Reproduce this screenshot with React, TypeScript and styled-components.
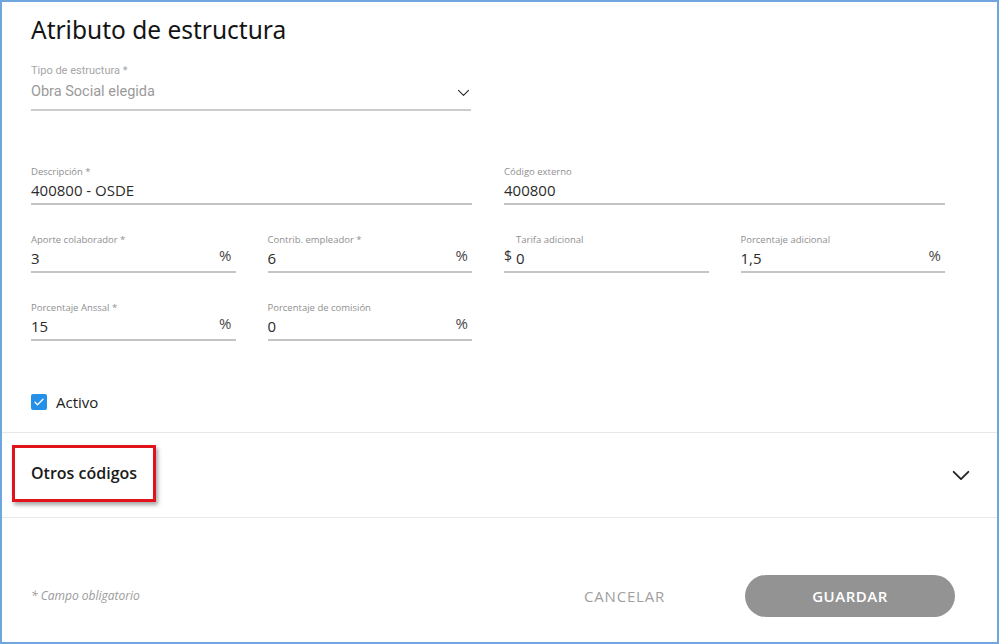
import React from "react";
import styled, { createGlobalStyle } from "styled-components";

const GlobalStyle = createGlobalStyle`
  html, body {
    margin: 0;
    padding: 0;
    background: #ffffff;
  }
  * {
    box-sizing: border-box;
  }
`;

const Frame = styled.div`
  width: 999px;
  height: 644px;
  border: 2px solid #6ea6dd;
  background: #ffffff;
  display: flex;
  flex-direction: column;
  font-family: "Open Sans", "Noto Sans", sans-serif;
  color: #333333;
  overflow: hidden;
`;

const Content = styled.div`
  padding: 12px 52px 0 29px;
`;

const Title = styled.h1`
  margin: 0;
  font-family: "Noto Sans", "Open Sans", sans-serif;
  font-size: 24.5px;
  font-weight: 400;
  line-height: 32px;
  color: #141414;
`;

const SelectField = styled.div`
  width: 440px;
  margin-top: 18px;
  border-bottom: 2px solid #cccccc;
  padding-bottom: 7px;
  font-family: Roboto, "Open Sans", sans-serif;
`;

const SelectLabel = styled.div`
  font-size: 11px;
  line-height: 14px;
  color: #a6a6a6;
`;

const SelectRow = styled.div`
  display: flex;
  align-items: center;
  justify-content: space-between;
  margin-top: 4px;
  font-size: 14.5px;
  line-height: 20px;
  color: #9a9a9a;
`;

const Grid = styled.div`
  display: grid;
  grid-template-columns: repeat(4, 1fr);
  column-gap: 32px;
  row-gap: 29px;
  margin-top: 55px;
  width: 914px;
`;

const Field = styled.div<{ $span?: number }>`
  grid-column: span ${(p) => p.$span ?? 1};
  border-bottom: 2px solid #c4c4c4;
  padding-bottom: 3px;
`;

const Label = styled.div<{ $indent?: boolean }>`
  font-size: 9.5px;
  line-height: 12px;
  color: #8f8f8f;
  padding-left: ${(p) => (p.$indent ? "12px" : "0")};
`;

const ValueRow = styled.div`
  display: flex;
  align-items: center;
  margin-top: 2px;
  height: 20px;
`;

const Prefix = styled.span`
  font-size: 14px;
  color: #333333;
  margin-right: 4px;
  margin-top: -6px;
`;

const Value = styled.span`
  flex: 1;
  font-size: 15px;
  line-height: 20px;
  color: #2b2b2b;
`;

const Suffix = styled.span`
  font-size: 15px;
  color: #4a4a4a;
  margin-right: 4px;
  margin-top: -6px;
`;

const CheckRow = styled.label`
  display: flex;
  align-items: center;
  gap: 9px;
  margin-top: 51px;
  margin-bottom: 20px;
  font-size: 15px;
  color: #1c1c1c;
`;

const CheckBox = styled.span`
  width: 16px;
  height: 16px;
  border-radius: 2px;
  background: #2490e8;
  display: flex;
  align-items: center;
  justify-content: center;
`;

const Accordion = styled.div`
  position: relative;
  border-top: 1px solid #e8e8e8;
  border-bottom: 1px solid #e8e8e8;
  height: 86px;
  display: flex;
  align-items: center;
  justify-content: space-between;
  padding: 0 25px 0 29px;
`;

const AccordionTitle = styled.span`
  font-size: 16px;
  font-weight: 600;
  color: #1a1a1a;
  margin-top: -5px;
`;

const Annotation = styled.div`
  position: absolute;
  left: 10px;
  top: 12px;
  width: 144px;
  height: 57px;
  border: 3px solid #e0121b;
  box-shadow: 2px 3px 4px rgba(0, 0, 0, 0.35);
  pointer-events: none;
`;

const Footer = styled.div`
  flex: 1;
  display: flex;
  align-items: center;
  justify-content: space-between;
  padding: 31px 42px 0 29px;
`;

const Note = styled.span`
  font-size: 12px;
  font-style: italic;
  color: #9a9a9a;
`;

const Actions = styled.div`
  display: flex;
  align-items: center;
  gap: 70px;
`;

const TextButton = styled.button`
  border: none;
  background: transparent;
  font-family: "Open Sans", sans-serif;
  font-size: 15px;
  letter-spacing: 0.8px;
  color: #a0a0a0;
  padding: 8px 10px;
`;

const PillButton = styled.button`
  width: 210px;
  height: 42px;
  border: none;
  border-radius: 21px;
  background: #939393;
  color: #ffffff;
  font-family: "Open Sans", sans-serif;
  font-size: 15px;
  font-weight: 600;
  letter-spacing: 0.5px;
`;

const Chevron = ({ size, stroke }: { size: number; stroke: number }) => (
  <svg width={size} height={size} viewBox="0 0 24 24" fill="none">
    <path
      d="M4 8.5l8 8 8-8"
      stroke="#222222"
      strokeWidth={stroke}
      strokeLinecap="round"
      strokeLinejoin="round"
    />
  </svg>
);

type FieldData = {
  label: string;
  value: string;
  span?: number;
  prefix?: string;
  suffix?: string;
};

const fields: FieldData[] = [
  { label: "Descripción *", value: "400800 - OSDE", span: 2 },
  { label: "Código externo", value: "400800", span: 2 },
  { label: "Aporte colaborador *", value: "3", suffix: "%" },
  { label: "Contrib. empleador *", value: "6", suffix: "%" },
  { label: "Tarifa adicional", value: "0", prefix: "$" },
  { label: "Porcentaje adicional", value: "1,5", suffix: "%" },
  { label: "Porcentaje Anssal *", value: "15", suffix: "%" },
  { label: "Porcentaje de comisión", value: "0", suffix: "%" },
];

export default function App() {
  return (
    <>
      <GlobalStyle />
      <Frame>
        <Content>
          <Title>Atributo de estructura</Title>
          <SelectField>
            <SelectLabel>Tipo de estructura *</SelectLabel>
            <SelectRow>
              <span>Obra Social elegida</span>
              <Chevron size={15} stroke={1.7} />
            </SelectRow>
          </SelectField>
          <Grid>
            {fields.map((f) => (
              <Field key={f.label} $span={f.span}>
                <Label $indent={!!f.prefix}>{f.label}</Label>
                <ValueRow>
                  {f.prefix && <Prefix>{f.prefix}</Prefix>}
                  <Value>{f.value}</Value>
                  {f.suffix && <Suffix>{f.suffix}</Suffix>}
                </ValueRow>
              </Field>
            ))}
          </Grid>
          <CheckRow>
            <CheckBox>
              <svg width="12" height="12" viewBox="0 0 24 24" fill="none">
                <path
                  d="M4 12.5l5 5L20 6.5"
                  stroke="#ffffff"
                  strokeWidth={2.6}
                  strokeLinecap="round"
                  strokeLinejoin="round"
                />
              </svg>
            </CheckBox>
            Activo
          </CheckRow>
        </Content>
        <Accordion>
          <AccordionTitle>Otros códigos</AccordionTitle>
          <Chevron size={22} stroke={2} />
          <Annotation />
        </Accordion>
        <Footer>
          <Note>* Campo obligatorio</Note>
          <Actions>
            <TextButton>CANCELAR</TextButton>
            <PillButton>GUARDAR</PillButton>
          </Actions>
        </Footer>
      </Frame>
    </>
  );
}
